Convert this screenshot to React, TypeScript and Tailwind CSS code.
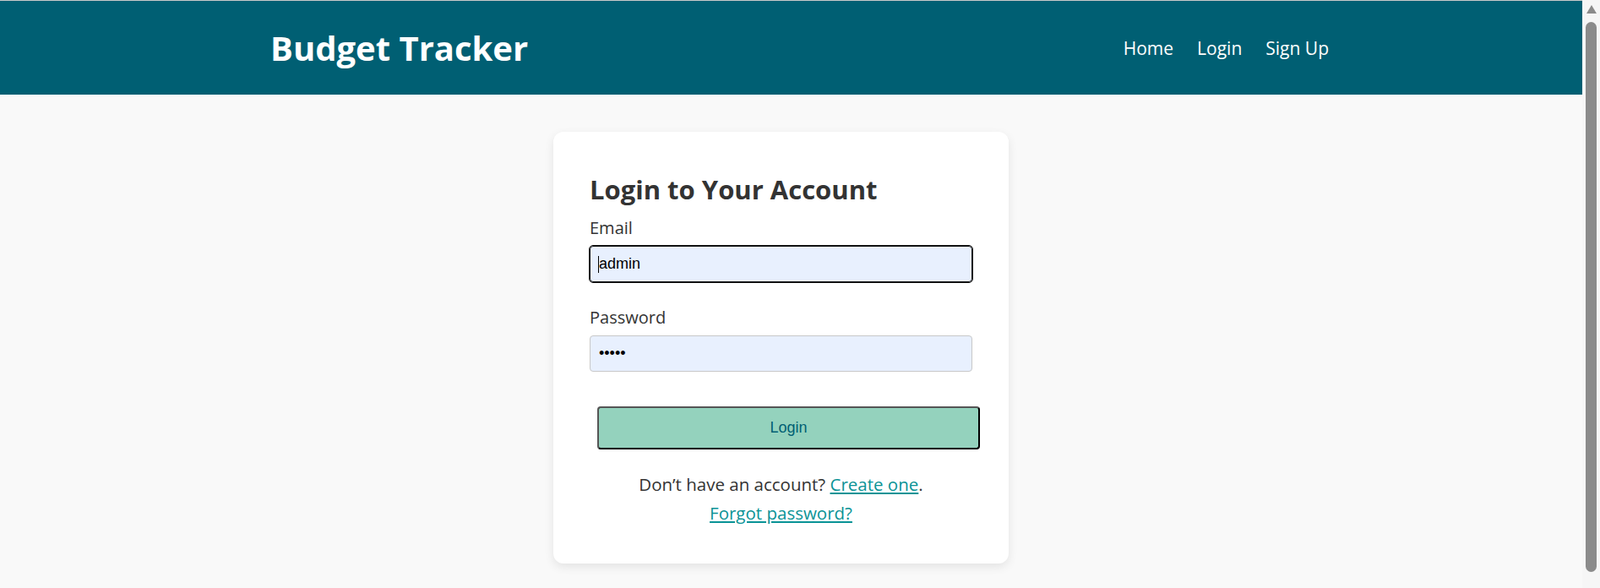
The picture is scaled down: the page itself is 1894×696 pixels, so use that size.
import React from 'react';

const Header: React.FC = () => (
  <header className="h-[112px] border-t border-[#c9c9c9] bg-[#005f73]">
    <div className="mx-auto flex h-full w-[1273px] items-center justify-between pl-5">
      <h1 className="text-[40px] font-bold leading-none text-white">Budget Tracker</h1>
      <nav className="flex items-center gap-[28px] text-[21px] leading-[24px] text-white">
        <a href="#">Home</a>
        <a href="#">Login</a>
        <a href="#">Sign Up</a>
      </nav>
    </div>
  </header>
);

const LoginCard: React.FC = () => (
  <div className="w-[539px] rounded-[12px] bg-white px-[43px] pb-[48px] pt-[50px] shadow-[0_4px_12px_rgba(0,0,0,0.09)]">
    <h2 className="text-[31px] font-bold leading-[36px] text-[#333]">Login to Your Account</h2>

    <div className="mt-4">
      <label className="block text-[20px] leading-[24px] text-[#333]">Email</label>
      <div className="relative mt-[9px]">
        <input
          type="text"
          defaultValue="admin"
          readOnly
          className="block h-[43px] w-full rounded-[4px] border border-[#111] bg-[#e8f0fe] pl-[10px] font-['Liberation_Sans',Arial,sans-serif] text-[18px] text-black outline outline-1 outline-[#111]"
        />
        <span className="absolute left-[10px] top-[12px] h-[20px] w-px bg-black" />
      </div>
    </div>

    <div className="mt-[30px]">
      <label className="block text-[20px] leading-[24px] text-[#333]">Password</label>
      <input
        type="password"
        defaultValue="admin"
        readOnly
        className="mt-[9px] block h-[43px] w-full rounded-[4px] border border-[#c8c8c8] bg-[#e8f0fe] pl-[10px] font-['Liberation_Sans',Arial,sans-serif] text-[18px] text-black outline-none"
      />
    </div>

    <button className="ml-[9px] mt-[41px] block h-[51px] w-full rounded-[4px] border-2 border-[#555] border-b-black border-r-black bg-[#94d2bd] font-['Liberation_Sans',Arial,sans-serif] text-[18px] text-[#005f73]">
      Login
    </button>

    <p className="mt-[29px] text-center text-[20.5px] leading-[24px] text-[#333]">
      Don’t have an account?{' '}
      <a href="#" className="text-[#0a9396] underline">
        Create one
      </a>
      .
    </p>
    <p className="mt-[10px] text-center text-[20.5px] leading-[24px]">
      <a href="#" className="text-[#0a9396] underline">
        Forgot password?
      </a>
    </p>
  </div>
);

// browser scrollbar as it shows in the screenshot
const Scrollbar: React.FC = () => (
  <div className="flex w-[21px] shrink-0 flex-col items-center bg-[#f6f6f6]">
    <div className="mt-[6px] h-0 w-0 border-x-[6px] border-b-[10px] border-x-transparent border-b-[#8b8b8b]" />
    <div className="mt-[10px] h-[651px] w-[13px] rounded-full bg-[#8b8b8b]" />
  </div>
);

const App: React.FC = () => {
  return (
    <div className="flex h-screen overflow-hidden bg-[#f9f9f9] font-['Open_Sans',sans-serif]">
      <div className="min-w-0 flex-1">
        <Header />
        <main className="flex justify-center pb-[33px] pr-[24px] pt-[44px]">
          <LoginCard />
        </main>
      </div>
      <Scrollbar />
    </div>
  );
};

export default App;
